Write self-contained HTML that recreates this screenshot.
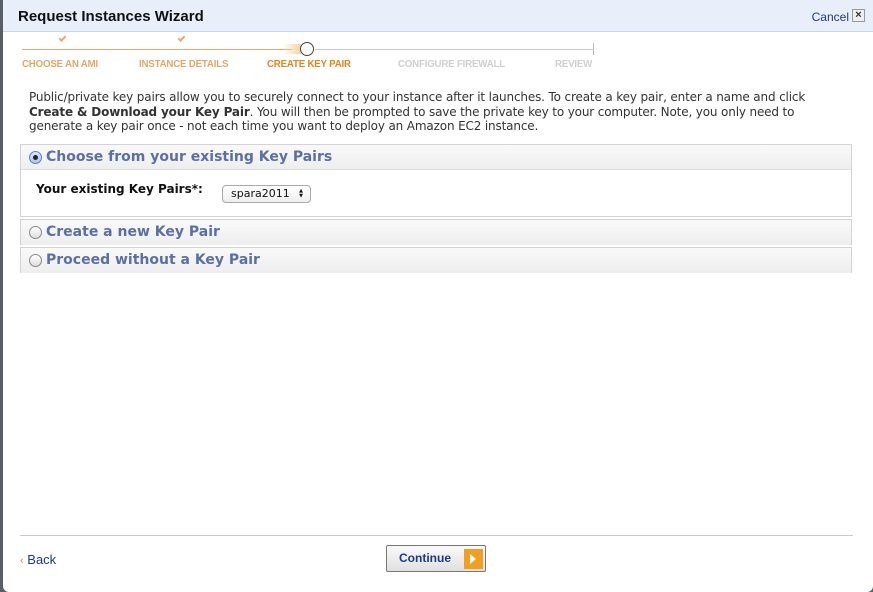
<!DOCTYPE html>
<html><head><meta charset="utf-8"><style>
*{margin:0;padding:0;box-sizing:border-box}
body{width:873px;height:592px;background:#5a5e66;position:relative;overflow:hidden;font-family:"DejaVu Sans","Liberation Sans",sans-serif}
.win{position:absolute;left:3px;top:0;width:870px;height:592px;background:#fff;border-radius:0 0 6px 6px}
.hdr{position:absolute;left:0;top:0;width:870px;height:32px;background:#e8effb;border-bottom:1px solid #c9d6ea}
.hdr h1{position:absolute;left:15px;top:8px;font:bold 15px "Liberation Sans",sans-serif;color:#111}
.cancel{position:absolute;right:24px;top:10px;font:12px "Liberation Sans",sans-serif;color:#1a3a8a}
.x{position:absolute;right:8px;top:9px;width:13px;height:13px;border:1px solid #999;background:#eee;font:bold 11px/11px "Liberation Sans",sans-serif;text-align:center;color:#333}
.step{position:absolute;top:59px;font:bold 10px "Liberation Sans",sans-serif;letter-spacing:-0.2px;transform:scaleX(0.97);transform-origin:left}
.line{position:absolute;height:1px;top:49px}
.chk{position:absolute;top:36px;width:7px;height:4px;border-left:2px solid #e6a866;border-bottom:2px solid #e6a866;transform:rotate(-45deg)}
p.desc{position:absolute;left:26px;top:90px;width:820px;font-size:12px;line-height:14.5px;color:#333;letter-spacing:-0.15px}
.box{position:absolute;left:17px;width:832px;border:1px solid #d3d3d3;background:#fff}
.bh{height:25px;background:linear-gradient(#f9f9f9,#eeeeee);border-bottom:1px solid #ddd;font:bold 14px/25px "DejaVu Sans",sans-serif;color:#5a70a4;padding-left:25px;position:relative}
.rad{position:absolute;left:8px;top:6px;width:13px;height:13px;border-radius:50%;border:1px solid #888;background:linear-gradient(#fff,#ddd)}
.rad.on::after{content:"";position:absolute;left:3px;top:3px;width:5px;height:5px;border-radius:50%;background:#223}
.rad.on{border-color:#5a7fc0;background:linear-gradient(#dce8fb,#a9c4ee)}
.sel{position:absolute;left:201px;top:15px;width:89px;height:18px;border:1px solid #aaa;border-radius:4px;background:linear-gradient(#fff,#eee);font:11px/16px "DejaVu Sans",sans-serif;padding-left:8px;color:#111}
.sel span{position:absolute;right:7px;top:3px;font-size:5px;line-height:5px}
</style></head><body>
<div class="win">
<div class="hdr"><h1>Request Instances Wizard</h1><span class="cancel">Cancel</span><div class="x">×</div></div>
<div class="line" style="left:19px;width:270px;background:#e2a86c"></div>
<div class="line" style="left:312px;width:279px;background:#ccc"></div>
<div style="position:absolute;left:590px;top:43px;width:1px;height:12px;background:#bbb"></div>
<div style="position:absolute;left:280px;top:44px;width:18px;height:10px;background:linear-gradient(90deg,rgba(255,255,255,0),#f7d2a4)"></div>
<div style="position:absolute;left:297px;top:42px;width:14px;height:14px;border-radius:50%;border:1.5px solid #444;background:#fff"></div>
<div class="chk" style="left:56px"></div>
<div class="chk" style="left:175px"></div>
<div class="step" style="left:19px;color:#e3a765">CHOOSE AN AMI</div>
<div class="step" style="left:136px;color:#e3a765">INSTANCE DETAILS</div>
<div class="step" style="left:264px;color:#e0861a">CREATE KEY PAIR</div>
<div class="step" style="left:395px;color:#cfcfcf">CONFIGURE FIREWALL</div>
<div class="step" style="left:552px;color:#cfcfcf">REVIEW</div>
<p class="desc">Public/private key pairs allow you to securely connect to your instance after it launches. To create a key pair, enter a name and click <b>Create &amp; Download your Key Pair</b>. You will then be prompted to save the private key to your computer. Note, you only need to generate a key pair once - not each time you want to deploy an Amazon EC2 instance.</p>
<div class="box" style="top:144px;height:73px"><div class="bh"><div class="rad on"></div>Choose from your existing Key Pairs</div>
<div style="position:relative;height:46px"><div style="position:absolute;left:15px;top:12px;font:bold 12px 'DejaVu Sans',sans-serif;color:#111">Your existing Key Pairs*:</div><div class="sel">spara2011<span>▲<br>▼</span></div></div></div>
<div class="box" style="top:219px;height:26px"><div class="bh" style="border:0"><div class="rad"></div>Create a new Key Pair</div></div>
<div class="box" style="top:247px;height:26px"><div class="bh" style="border:0"><div class="rad"></div>Proceed without a Key Pair</div></div>
<div style="position:absolute;left:17px;top:535px;width:833px;height:1px;background:#ccc"></div>
<div style="position:absolute;left:17px;top:552px;font:13px 'Liberation Sans',sans-serif;color:#1a3a8a"><span style="color:#e3861a;font-size:11px">‹</span> Back</div>
<div style="position:absolute;left:383px;top:545px;width:100px;height:27px;border:1px solid #777;border-radius:2px;background:linear-gradient(#fafafa,#e0e0e0)">
<span style="position:absolute;left:12px;top:5px;font:bold 12px 'Liberation Sans',sans-serif;color:#1a3a8a">Continue</span>
<div style="position:absolute;left:77px;top:3px;width:19px;height:20px;background:#f0a020"><div style="position:absolute;left:6px;top:5px;border-left:6px solid #fff;border-top:5px solid transparent;border-bottom:5px solid transparent"></div></div></div>
</div>
</body></html>
